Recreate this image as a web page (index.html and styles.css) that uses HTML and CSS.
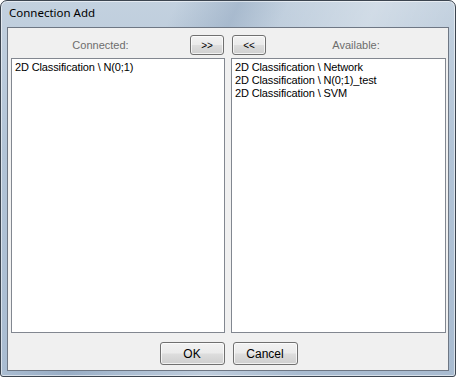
FILE: index.html
```html
<!DOCTYPE html>
<html lang="en">
<head>
    <meta charset="UTF-8" />
    <title>Connection Add</title>
    <link rel="stylesheet" href="styles.css">
</head>
<body>
    <div class="window">
        <div class="titlebar">Connection Add</div>

        <div class="client">
            <div class="panes">
                <div class="pane">
                    <div class="pane-head">
                        <span class="caption">Connected:</span>
                        <button class="btn small">&gt;&gt;</button>
                    </div>
                    <div class="listbox">
                        <div class="item">2D Classification \ N(0;1)</div>
                    </div>
                </div>
                <div class="pane">
                    <div class="pane-head">
                        <button class="btn small">&lt;&lt;</button>
                        <span class="caption">Available:</span>
                    </div>
                    <div class="listbox">
                        <div class="item">2D Classification \ Network</div>
                        <div class="item">2D Classification \ N(0;1)_test</div>
                        <div class="item">2D Classification \ SVM</div>
                    </div>
                </div>
            </div>

            <div class="actions">
                <button class="btn wide">OK</button>
                <button class="btn wide">Cancel</button>
            </div>
        </div>
    </div>
</body>
</html>
```

FILE: styles.css
```css
:root {
    --face: #f0f0f0;
    --frame-dark: #3c4550;
    --list-border: #828790;
    --caption: #6d6d6d;
}

html, body {
    margin: 0;
    padding: 0;
    background: #ffffff;
}

.window {
    width: 456px;
    height: 377px;
    box-sizing: border-box;
    border: 1px solid var(--frame-dark);
    border-radius: 7px 7px 3px 3px;
    padding: 0 6px 5px 6px;
    display: flex;
    flex-direction: column;
    background:
        linear-gradient(115deg, rgba(255,255,255,0) 28%, rgba(120,145,175,0.35) 38%, rgba(255,255,255,0) 46%, rgba(255,255,255,0.25) 60%, rgba(255,255,255,0) 75%),
        linear-gradient(180deg, #c3d1df 0%, #b2c4d7 40%, #a9bcd1 100%);
    box-shadow: inset 0 0 0 1px rgba(255,255,255,0.55);
}

.titlebar {
    height: 26px;
    box-sizing: border-box;
    padding: 4px 0 0 2px;
    font-family: "Noto Sans", "Liberation Sans", sans-serif;
    font-size: 11.5px;
    color: #000;
    line-height: 16px;
}

.client {
    flex: 1;
    border: 1px solid #6e7784;
    background: var(--face);
    display: flex;
    flex-direction: column;
    padding: 7px 2px 5px 3px;
    font-family: "Liberation Sans", Arial, sans-serif;
    font-size: 11px;
}

.panes {
    display: grid;
    grid-template-columns: 214px 215px;
    column-gap: 6px;
}

.pane {
    display: flex;
    flex-direction: column;
}

.pane-head {
    display: flex;
    align-items: center;
    height: 20px;
    margin-bottom: 3px;
}

.pane:first-child .pane-head {
    padding-right: 1px;
}

.pane:last-child .pane-head {
    padding-left: 1px;
}

.caption {
    flex: 1;
    text-align: center;
    color: var(--caption);
    font-size: 11px;
}

.listbox {
    height: 275px;
    box-sizing: border-box;
    border: 1px solid var(--list-border);
    background: #ffffff;
    padding: 2px 3px;
}

.item {
    height: 13px;
    line-height: 13px;
    color: #000;
    white-space: nowrap;
    letter-spacing: -0.13px;
}

.btn {
    box-sizing: border-box;
    border: 1px solid #707070;
    border-radius: 3px;
    background: linear-gradient(180deg, #f2f2f2 0%, #ebebeb 48%, #dddddd 52%, #cfcfcf 100%);
    box-shadow: inset 0 0 0 1px rgba(255,255,255,0.7);
    font-family: "Liberation Sans", Arial, sans-serif;
    font-size: 11px;
    color: #000;
    padding: 0;
    cursor: pointer;
}

.btn.small {
    width: 34px;
    height: 20px;
    font-size: 10px;
}

.btn.wide {
    width: 65px;
    height: 23px;
    font-size: 12px;
}

.actions {
    margin-top: auto;
    display: flex;
    justify-content: center;
    gap: 8px;
}
```
